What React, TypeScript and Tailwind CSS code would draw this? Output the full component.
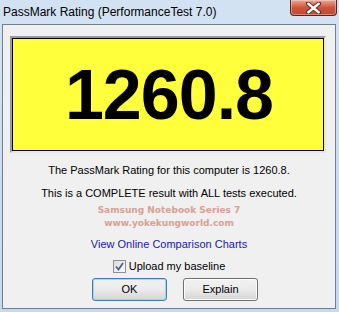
export default function App() {
  return (
    <div className="w-[339px] h-[312px] flex flex-col bg-gradient-to-b from-[#d3e2f3] to-[#c5d9ef] font-['Liberation_Sans',Arial,sans-serif] overflow-hidden">
      <div className="h-[24px] flex items-start relative">
        <span className="ml-[3px] mt-[3px] text-[12px] text-black">PassMark Rating (PerformanceTest 7.0)</span>
        <div className="absolute left-[290px] top-0 w-[47px] h-[16px] rounded-b-[4px] border border-t-0 border-[#5a2319] bg-gradient-to-b from-[#e9a695] via-[#d0533c] to-[#c24a32] flex items-center justify-center shadow-[inset_0_0_0_1px_rgba(255,255,255,0.35)]">
          <svg width="15" height="12" viewBox="0 0 15 12">
            <path d="M2 1.5 L13 10.5 M13 1.5 L2 10.5" stroke="#5b2b22" strokeWidth="4.2" strokeLinecap="round" />
            <path d="M2.3 1.8 L12.7 10.2 M12.7 1.8 L2.3 10.2" stroke="#ffffff" strokeWidth="2.4" strokeLinecap="round" />
          </svg>
        </div>
      </div>
      <div className="ml-[2px] mr-[3px] h-[285px] border border-[#6f7e90] bg-[#f0f0f0] flex flex-col">
        <div className="ml-[7px] mt-[11px] w-[316px] h-[117px] border-2 border-t-[#9a9a9a] border-l-[#9a9a9a] border-r-[#e6e6e6] border-b-[#e6e6e6]">
          <div className="w-full h-full border border-black bg-[#ffff3c] flex items-center justify-center">
            <span className="text-[70px] font-bold text-black leading-none tracking-[-1px] ml-[2px] mt-[1px]">1260.8</span>
          </div>
        </div>
        <div className="flex flex-col items-center text-[11px] text-black">
          <span className="mt-[11px] leading-[13px]">The PassMark Rating for this computer is 1260.8.</span>
          <span className="mt-[10px] leading-[13px]">This is a COMPLETE result with ALL tests executed.</span>
          <div className="mt-[4px] flex flex-col items-center font-['DejaVu_Sans',Verdana,sans-serif] font-bold text-[9px] text-[#d6a194] leading-[13px]">
            <span>Samsung Notebook Series 7</span>
            <span>www.yokekungworld.com</span>
          </div>
          <span className="mt-[8px] leading-[13px] text-[#1a1aa6]">View Online Comparison Charts</span>
          <div className="mt-[9px] flex items-center gap-[3px]">
            <div className="w-[13px] h-[13px] border border-[#8e8f8f] bg-gradient-to-br from-[#dcdcdc] to-[#fbfbfb] flex items-center justify-center">
              <svg width="9" height="9" viewBox="0 0 9 9">
                <path d="M1 4.5 L3.5 7.5 L8 1" stroke="#4a5f97" strokeWidth="1.8" fill="none" />
              </svg>
            </div>
            <span className="leading-[13px]">Upload my baseline</span>
          </div>
          <div className="mt-[5px] flex gap-[16px] ml-[12px]">
            <button className="w-[75px] h-[23px] rounded-[3px] border border-[#3c7fb1] bg-gradient-to-b from-[#f2f2f2] via-[#ebebeb] to-[#d4d4d4] shadow-[inset_0_0_0_1px_#9fd6f2] text-[11px] text-black">
              OK
            </button>
            <button className="w-[75px] h-[23px] rounded-[3px] border border-[#707070] bg-gradient-to-b from-[#f2f2f2] via-[#ebebeb] to-[#d4d4d4] shadow-[inset_0_0_0_1px_#fcfcfc] text-[11px] text-black">
              Explain
            </button>
          </div>
        </div>
      </div>
    </div>
  );
}
